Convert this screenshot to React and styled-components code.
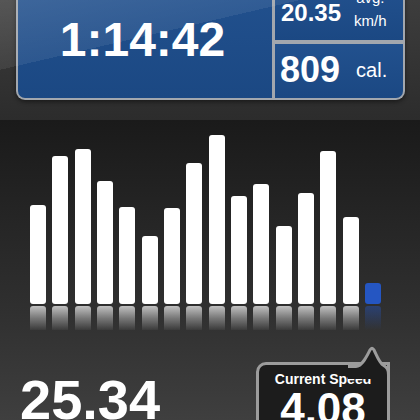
import React from 'react'
import styled, { createGlobalStyle } from 'styled-components'

const GlobalStyle = createGlobalStyle`
  html, body {
    margin: 0;
    padding: 0;
    background: #1b1b1b;
  }
  body {
    font-family: "Liberation Sans", Arial, sans-serif;
    overflow: hidden;
  }
`;

const Screen = styled.div`
    width: 420px;
    height: 420px;
    overflow: hidden;
    display: flex;
    flex-direction: column;
`;

const Header = styled.header`
    position: relative;
    display: flex;
    flex-direction: column;
    flex-shrink: 0;
    height: 120px;
    padding: 0 15px 0 16px;
    box-sizing: border-box;
    background: linear-gradient(180deg, #3d3d3d 0%, #2c2c2c 100%);

    &::after {
      content: '';
      position: absolute;
      inset: 0;
      pointer-events: none;
      background: linear-gradient(166.9deg, rgba(255,255,255,0.13) 0, rgba(255,255,255,0.07) 68px, transparent 68px);
    }
`;

const Panel = styled.div`
    margin-top: -14px;
    display: grid;
    grid-template-columns: 1fr 128px;
    grid-template-rows: 54px 54px;
    gap: 4px 3px;
    padding: 0 2px 2px;
    background: #a2a7ae;
    border-radius: 0 0 9px 9px;
    box-shadow: 0 2px 4px rgba(0, 0, 0, 0.45);
`;

const Cell = styled.div`
    display: flex;
    align-items: center;
    color: #fff;
    background: linear-gradient(180deg, #22518e 0%, #1b4883 100%);
    padding: ${(p) => p.$pad};
    gap: ${(p) => p.$gap || '0'};
    border-radius: ${(p) => p.$radius || '0'};
    grid-row: ${(p) => (p.$main ? 'span 2' : 'auto')};
    justify-content: ${(p) => (p.$main ? 'center' : 'flex-start')};
`;

const Value = styled.span`
    font-weight: 700;
    font-size: ${(p) => p.$size}px;
    line-height: 1;
    letter-spacing: 0;
`;

const Unit = styled.span`
    font-size: ${(p) => p.$size}px;
    line-height: ${(p) => p.$lh || 1};
    text-align: center;
    margin-bottom: ${(p) => p.$shift || '0'};
`;

const Body = styled.main`
    flex: 1;
    display: flex;
    flex-direction: column;
    background: linear-gradient(180deg, #1a1a1a 0%, #303030 60%, #424242 100%);
`;

const Chart = styled.div`
    display: grid;
    grid-template-columns: repeat(16, 16px);
    column-gap: 6.33px;
    padding-left: 30px;
    height: 210px;
    flex-shrink: 0;
`;

const Column = styled.div`
    display: flex;
    flex-direction: column;
    justify-content: flex-end;
`;

const Bar = styled.div`
    border-radius: 3px;
    background: ${(p) => (p.$current ? '#2556c2' : '#ffffff')};
`;

const Reflection = styled.div`
    margin-top: 2px;
    height: 24px;
    border-radius: 3px 3px 0 0;
    background: ${(p) =>
      p.$current
        ? 'linear-gradient(180deg, rgba(37,86,194,0.45), rgba(37,86,194,0))'
        : 'linear-gradient(180deg, rgba(255,255,255,0.7) 0%, rgba(255,255,255,0.35) 50%, rgba(255,255,255,0.04) 100%)'};
`;

const Footer = styled.footer`
    flex: 1;
    display: flex;
    justify-content: space-between;
    align-items: flex-start;
    padding: 0 30px 0 20px;
`;

const Distance = styled.div`
    margin-top: 42px;
    color: #fff;
    font-weight: 700;
    font-size: 56px;
    line-height: 1;
`;

const Bubble = styled.div`
    position: relative;
    margin-top: 32px;
    width: 134px;
    height: 80px;
    box-sizing: border-box;
    border: 3px solid #9c9c9c;
    border-radius: 10px 0 10px 10px;
    background: #1c1c1c;
    color: #fff;
    text-align: center;
    padding-top: 7px;
`;

const Tab = styled.svg`
    position: absolute;
    top: -20px;
    right: -3px;
`;

const BubbleLabel = styled.div`
    font-weight: 700;
    font-size: 14px;
    line-height: 1;
`;

const BubbleValue = styled.div`
    margin-top: 1px;
    font-weight: 700;
    font-size: 44px;
    line-height: 1;
`;

const bars = [99, 148, 155, 123, 97, 68, 96, 141, 169, 108, 120, 78, 111, 153, 87];

const App = () => {
  return (
    <Screen>
      <GlobalStyle />
      <Header>
        <Panel>
          <Cell $main $pad="0 5px 4px 0" $radius="0 0 0 7px">
            <Value $size={48}>1:14:42</Value>
          </Cell>
          <Cell $pad="0 0 0 6px" $gap="13px">
            <Value $size={24}>20.35</Value>
            <Unit $size={15} $lh="23px" $shift="8px">avg.<br />km/h</Unit>
          </Cell>
          <Cell $pad="0 0 2px 5px" $gap="16px" $radius="0 0 7px 0">
            <Value $size={36}>809</Value>
            <Unit $size={20}>cal.</Unit>
          </Cell>
        </Panel>
      </Header>
      <Body>
        <Chart>
          {bars.map((h, i) => (
            <Column key={i}>
              <Bar style={{ height: h }} />
              <Reflection />
            </Column>
          ))}
          <Column>
            <Bar $current style={{ height: 21 }} />
            <Reflection $current />
          </Column>
        </Chart>
        <Footer>
          <Distance>25.34</Distance>
          <Bubble>
            <Tab width="42" height="34" viewBox="0 0 42 34">
              <path d="M0 21.5 L8 21.5 C14 21.5 19 11 22 5 Q24 1.5 26 5 C29 11 31 17 35 20 C39.5 22.5 40.5 25 40.5 30 L40.5 34 L0 34 Z" fill="#1c1c1c" />
              <path d="M0 21.5 L8 21.5 C14 21.5 19 11 22 5 Q24 1.5 26 5 C29 11 31 17 35 20 C39.5 22.5 40.5 25 40.5 30 L40.5 34" fill="none" stroke="#9c9c9c" strokeWidth="3" strokeLinejoin="round" />
            </Tab>
            <BubbleLabel>Current Speed</BubbleLabel>
            <BubbleValue>4.08</BubbleValue>
          </Bubble>
        </Footer>
      </Body>
    </Screen>
  )
}

export default App
